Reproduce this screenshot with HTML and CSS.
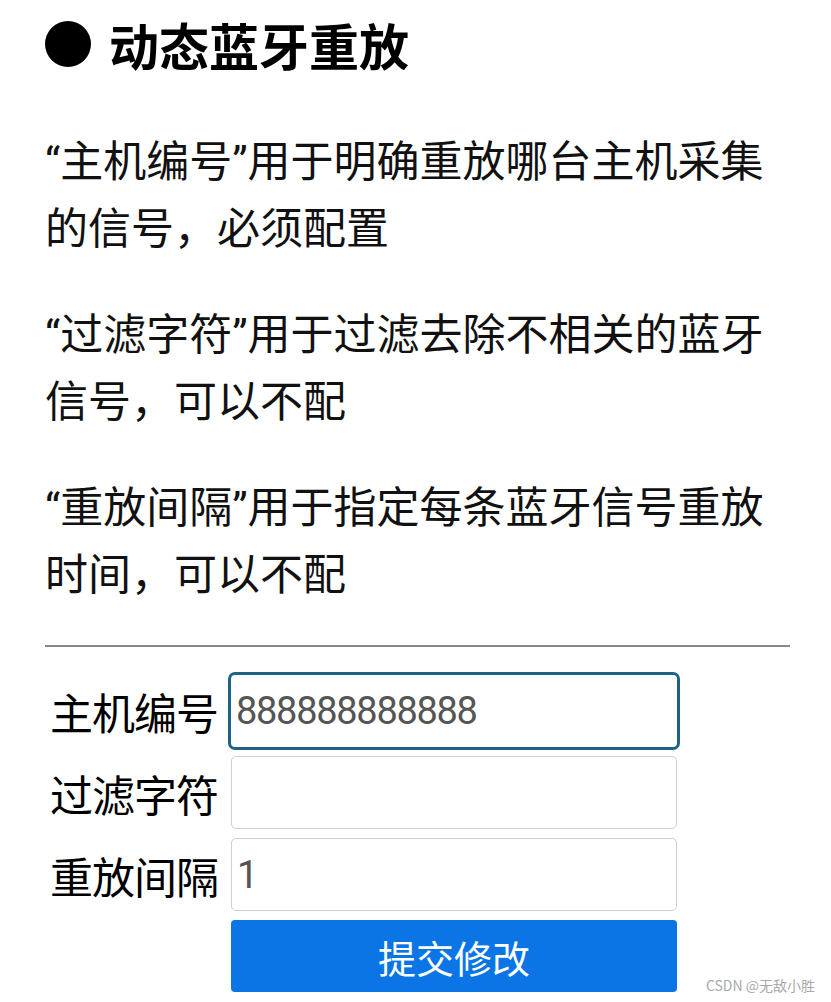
FILE: index.html
```html
<!DOCTYPE html>
<html lang="zh">
<head>
<meta charset="utf-8">
<link rel="stylesheet" href="styles.css">
</head>
<body>
<div class="page">
  <h1 class="title"><span class="dot"></span>动态蓝牙重放</h1>
  <p class="desc">“主机编号”用于明确重放哪台主机采集的信号，必须配置</p>
  <p class="desc">“过滤字符”用于过滤去除不相关的蓝牙信号，可以不配</p>
  <p class="desc">“重放间隔”用于指定每条蓝牙信号重放时间，可以不配</p>
  <hr class="rule">
  <form class="form">
    <div class="row first">
      <label class="label">主机编号</label>
      <div class="field focused">888888888888</div>
    </div>
    <div class="row">
      <label class="label">过滤字符</label>
      <div class="field"></div>
    </div>
    <div class="row">
      <label class="label">重放间隔</label>
      <div class="field">1</div>
    </div>
    <div class="row">
      <span class="label"></span>
      <div class="btn">提交修改</div>
    </div>
  </form>
  <div class="mark">CSDN @无敌小胜</div>
</div>
</body>
</html>
```
FILE: styles.css
```css
html, body { margin: 0; padding: 0; background: #fff; }
body {
  font-family: "Noto Sans CJK SC", "Noto Sans", sans-serif;
  color: #000;
}
.page { position: relative; width: 831px; height: 1002px; overflow: hidden; padding: 0 0 0 45px; box-sizing: border-box; }
.title {
  margin: 0;
  padding-top: 10px;
  display: flex;
  align-items: center;
  font-size: 50px;
  font-weight: 700;
  line-height: 68px;
  height: 68px;
}
.dot { width: 46px; height: 46px; border-radius: 50%; background: #000; margin-right: 18px; flex: none; }
.desc {
  margin: 39px 0 0;
  width: 745px;
  font-family: Roboto, "Noto Sans CJK SC", sans-serif;
  font-size: 43px;
  line-height: 67px;
  color: #111;
}
.title + .desc { margin-top: 51px; }
.rule { margin: 36px 0 0; width: 745px; border: 0; border-top: 2px solid #888; height: 0; }
.form { margin-top: 25px; display: flex; flex-direction: column; gap: 9px; }
.row { display: flex; align-items: center; }
.row.first { margin-bottom: -3px; }
.label { width: 186px; padding-left: 5px; box-sizing: border-box; font-size: 43px; letter-spacing: -1px; color: #000; white-space: nowrap; }
.field {
  width: 446px; height: 73px; box-sizing: border-box;
  border: 1px solid #cfcfcf; border-radius: 5px;
  font-family: Roboto, "Noto Sans", sans-serif; font-size: 38px; letter-spacing: -1.3px; color: #555;
  display: flex; align-items: center; padding-left: 5px; background: #fff;
}
.field.focused { width: 452px; height: 78px; margin-left: -3px; border: 3px solid #1d6383; border-radius: 7px; padding-left: 5px; }
.btn {
  width: 446px; height: 72px; background: #0b75e6; border-radius: 4px;
  color: #fff; font-size: 38px; display: flex; align-items: center; justify-content: center;
}
.mark { position: absolute; right: 16px; bottom: 7px; font-size: 14px; color: #aaa; }
```
